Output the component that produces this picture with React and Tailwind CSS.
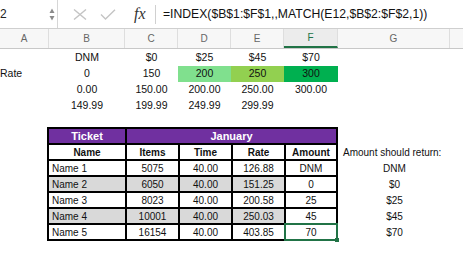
import React from "react";

const cols = "grid grid-cols-[49px_76px_53px_53px_53px_54px_112px_13px]";

function TopRow({ h, cells }) {
  return (
    <div className={`${cols} ${h}`}>
      {cells.map((c, i) => (
        <div
          key={i}
          className={`flex items-center ${c.left ? "justify-start" : "justify-center"} ${c.bg || ""}`}
        >
          {c.t}
        </div>
      ))}
    </div>
  );
}

const data = [
  ["Name 1", "5075", "40.00", "126.88", "DNM", false, "DNM"],
  ["Name 2", "6050", "40.00", "151.25", "0", true, "$0"],
  ["Name 3", "8023", "40.00", "200.58", "25", false, "$25"],
  ["Name 4", "10001", "40.00", "250.03", "45", true, "$45"],
  ["Name 5", "16154", "40.00", "403.85", "70", false, "$70"],
];

export default function App() {
  const E = { t: "" };
  return (
    <div className="w-[463px] h-[255px] overflow-hidden bg-white text-[#111] font-['Liberation_Sans',Arial,sans-serif]">
      {/* formula bar */}
      <div className="flex h-[29px] items-stretch border-b border-[#cfcfcf]">
        <div className="w-[58px] flex items-center justify-between border-r border-[#d6d6d6] pr-[2px]">
          <span className="text-[12px] leading-none text-[#222]">2</span>
          <svg width="6" height="13" viewBox="0 0 6 13">
            <path d="M3 0.5 L5.5 5 L0.5 5 Z" fill="#8a8a8a" />
            <path d="M3 12.5 L5.5 8 L0.5 8 Z" fill="#8a8a8a" />
          </svg>
        </div>
        <div className="w-[97px] flex items-center">
          <svg className="ml-[15px]" width="14" height="11" viewBox="0 0 14 11">
            <path d="M1 0.5 L13 10.5 M13 0.5 L1 10.5" stroke="#c4c4c4" strokeWidth="1.4" fill="none" />
          </svg>
          <svg className="ml-[13px]" width="16" height="11" viewBox="0 0 16 11">
            <path d="M1 5.5 L5.5 10 L15 0.8" stroke="#c4c4c4" strokeWidth="1.4" fill="none" />
          </svg>
          <span className="ml-[18px] text-[16px] italic leading-none text-[#333] font-['Liberation_Serif',serif]">fx</span>
        </div>
        <div className="flex items-center">
          <div className="h-[19px] w-px bg-[#d0d0d0]" />
          <span className="ml-[7px] text-[12.2px] text-[#111] whitespace-nowrap">
            =INDEX($B$1:$F$1,,MATCH(E12,$B$2:$F$2,1))
          </span>
        </div>
      </div>

      {/* column headers */}
      <div className={`${cols} h-[20px] border-b border-[#c8c8c8] bg-[#f7f7f7] text-[10px] text-[#666]`}>
        {["A", "B", "C", "D", "E"].map((l) => (
          <div key={l} className="flex items-center justify-center border-r border-[#dedede]">{l}</div>
        ))}
        <div className="flex items-center justify-center border-r border-[#dedede] border-b-2 border-b-[#217346] bg-[#ececec] text-[#217346]">F</div>
        <div className="flex items-center justify-center border-r border-[#dedede]">G</div>
        <div />
      </div>

      {/* top block */}
      <div className="text-[10.5px]">
        <TopRow h="h-[17px]" cells={[E, { t: "DNM" }, { t: "$0" }, { t: "$25" }, { t: "$45" }, { t: "$70" }, E, E]} />
        <TopRow
          h="h-[16px]"
          cells={[
            { t: "Rate", left: true },
            { t: "0" },
            { t: "150" },
            { t: "200", bg: "bg-[#80e08e]" },
            { t: "250", bg: "bg-[#92d050]" },
            { t: "300", bg: "bg-[#00b050]" },
            E,
            E,
          ]}
        />
        <TopRow h="h-[16px]" cells={[E, { t: "0.00" }, { t: "150.00" }, { t: "200.00" }, { t: "250.00" }, { t: "300.00" }, E, E]} />
        <TopRow h="h-[15px]" cells={[E, { t: "149.99" }, { t: "199.99" }, { t: "249.99" }, { t: "299.99" }, E, E, E]} />
        <div className="h-[14px]" />
      </div>

      {/* table section */}
      <div className="flex text-[10px]">
        <div className="w-[47px]" />
        <div className="grid w-[291px] grid-cols-[76px_51px_51px_51px_50px] gap-[2px] bg-black p-[2px]">
          <div className="h-[14px] flex items-center justify-center bg-[#7030a0] text-white font-bold text-[11px]">Ticket</div>
          <div className="col-span-4 h-[14px] flex items-center justify-center bg-[#7030a0] text-white font-bold text-[11px]">January</div>
          {["Name", "Items", "Time", "Rate", "Amount"].map((h) => (
            <div key={h} className="h-[14px] flex items-center justify-center bg-white font-bold">{h}</div>
          ))}
          {data.map((r, i) => {
            const bg = r[5] ? "bg-[#d9d9d9]" : "bg-white";
            return (
              <React.Fragment key={i}>
                <div className={`h-[14px] flex items-center pl-[3px] ${bg}`}>{r[0]}</div>
                <div className={`h-[14px] flex items-center justify-center ${bg}`}>{r[1]}</div>
                <div className={`h-[14px] flex items-center justify-center ${bg}`}>{r[2]}</div>
                <div className={`h-[14px] flex items-center justify-center ${bg}`}>{r[3]}</div>
                <div className="relative h-[14px] flex items-center justify-center bg-white">
                  {r[4]}
                  {i === 4 && (
                    <>
                      <div className="absolute -inset-[2px] border-2 border-[#217346]" />
                      <div className="absolute -bottom-[3px] -right-[3px] h-[4px] w-[4px] bg-[#217346]" />
                    </>
                  )}
                </div>
              </React.Fragment>
            );
          })}
        </div>
        <div className="flex w-[112px] flex-col gap-[2px] pt-[2px]">
          <div className="h-[14px]" />
          <div className="h-[14px] flex items-center pl-[5px] whitespace-nowrap">Amount should return:</div>
          {data.map((r) => (
            <div key={r[6]} className="h-[14px] flex items-center justify-center pl-[1px]">{r[6]}</div>
          ))}
        </div>
      </div>
    </div>
  );
}
